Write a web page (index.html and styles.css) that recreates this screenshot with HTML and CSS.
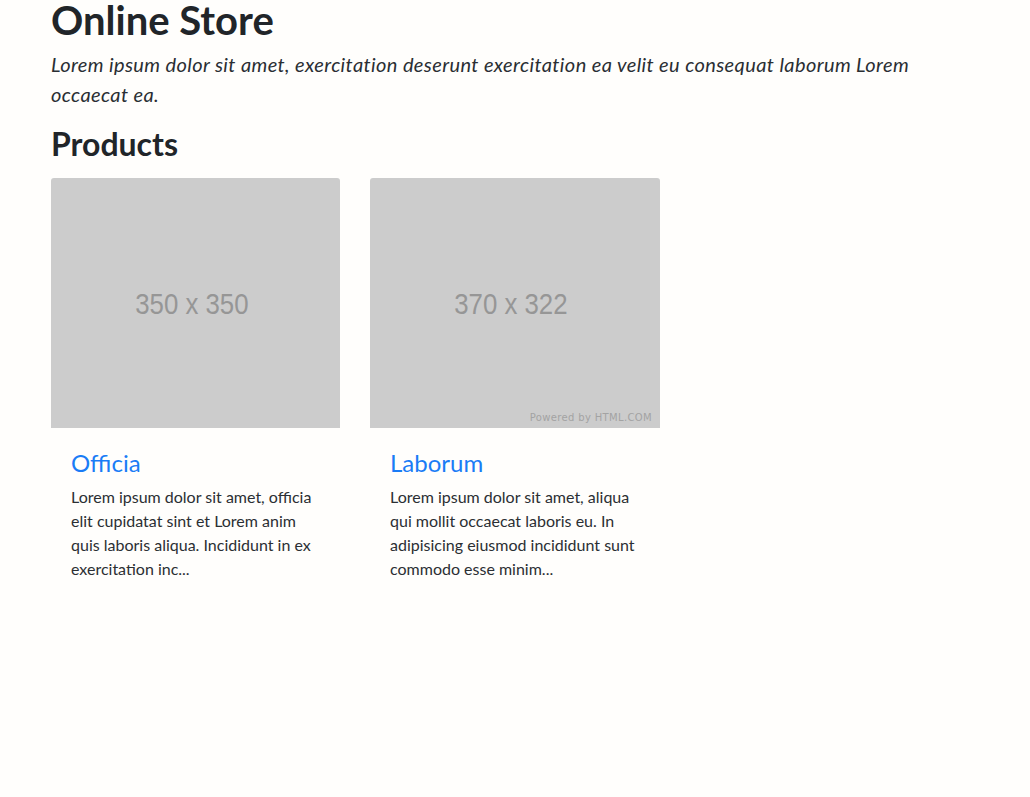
FILE: index.html
```html
<!DOCTYPE html>
<html lang="en">
<head>
<meta charset="utf-8">
<title>Online Store</title>
<link rel="stylesheet" href="styles.css">
</head>
<body>
<main class="container">
  <h1 class="title">Online Store</h1>
  <p class="lead">Lorem ipsum dolor sit amet, exercitation deserunt exercitation ea velit eu consequat laborum Lorem occaecat ea.</p>
  <h2 class="section">Products</h2>
  <div class="products">
    <article class="card">
      <div class="thumb"><span class="thumb-label">350 x 350</span></div>
      <div class="card-body">
        <h4 class="card-title">Officia</h4>
        <p class="card-text">Lorem ipsum dolor sit amet, officia elit cupidatat sint et Lorem anim quis laboris aliqua. Incididunt in ex exercitation inc...</p>
      </div>
    </article>
    <article class="card">
      <div class="thumb"><span class="thumb-label">370 x 322</span><span class="powered">Powered by HTML.COM</span></div>
      <div class="card-body">
        <h4 class="card-title">Laborum</h4>
        <p class="card-text">Lorem ipsum dolor sit amet, aliqua qui mollit occaecat laboris eu. In adipisicing eiusmod incididunt sunt commodo esse minim...</p>
      </div>
    </article>
  </div>
</main>
</body>
</html>
```
FILE: styles.css
```css
html, body {
  margin: 0;
  padding: 0;
  background: #fffefc;
}
body {
  font-family: "Segoe UI", Lato, "Noto Sans", sans-serif;
  font-size: 16px;
  line-height: 1.5;
  color: #212529;
}
.container {
  padding: 0 51px;
}
.title {
  font-size: 40px;
  font-weight: 700;
  line-height: 41px;
  margin: 0 0 8px;
}
.lead {
  font-size: 20px;
  font-style: italic;
  font-weight: 400;
  line-height: 30px;
  margin: 0 0 16px;
  max-width: 880px;
  letter-spacing: 0.4px;
  color: #2a2e33;
}
.section {
  font-size: 32px;
  font-weight: 700;
  line-height: 38px;
  margin: 0 0 15px;
}
.products {
  display: flex;
  gap: 30px;
}
.card {
  width: 289px;
}
.card + .card {
  width: 290px;
}
.thumb {
  position: relative;
  height: 250px;
  background: #cccccc;
  border-radius: 3px 3px 0 0;
  display: flex;
  align-items: center;
  justify-content: center;
}
.thumb-label {
  font-family: "Liberation Sans", Arial, sans-serif;
  font-size: 30px;
  color: #969696;
  transform: scaleX(0.86);
  margin: 1px 8px 0 0;
}
.powered {
  position: absolute;
  right: 8px;
  bottom: 3px;
  font-family: "DejaVu Sans", Verdana, sans-serif;
  font-size: 10px;
  color: #a3a3a3;
  letter-spacing: 0.35px;
}
.card-body {
  padding: 20px;
}
.card-title {
  font-size: 24px;
  font-weight: 400;
  line-height: 29px;
  color: #1a7cf6;
  margin: 0 0 8px;
}
.card-text {
  margin: 0;
  font-size: 16px;
  line-height: 24px;
  color: #2b2f33;
}
```
